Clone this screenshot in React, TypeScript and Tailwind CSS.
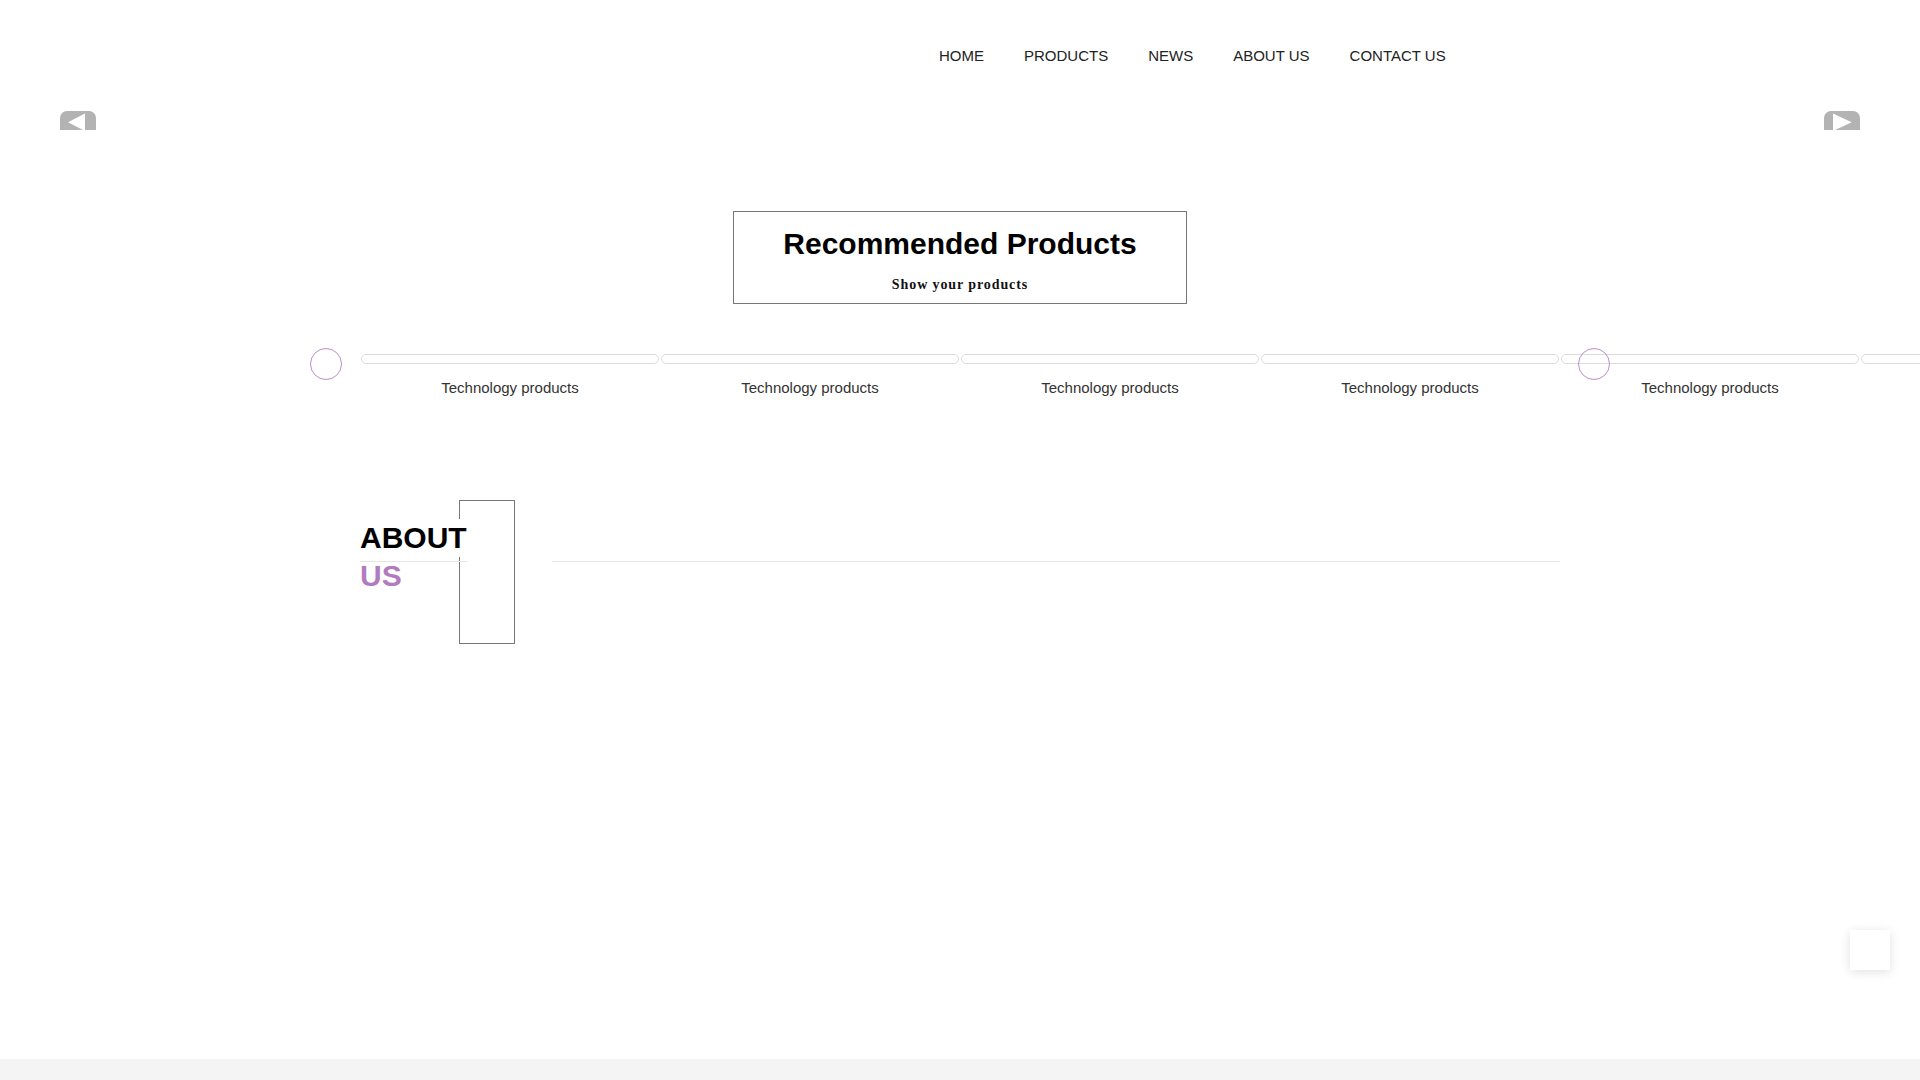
import React from "react";

const NAV = ["HOME", "PRODUCTS", "NEWS", "ABOUT US", "CONTACT US"];
// last slide only peeks in at the right edge, its caption is off screen
const SLIDES = ["Technology products", "Technology products", "Technology products", "Technology products", "Technology products", ""];

function Arrow({ dir }: { dir: "left" | "right" }) {
  return (
    <button
      type="button"
      aria-label={dir === "left" ? "Previous" : "Next"}
      className={`absolute top-0 w-9 h-9 rounded-[7px] bg-[#b3b3b3] ${
        dir === "left" ? "left-[60px]" : "right-[60px]"
      }`}
    >
      <svg width="36" height="36" viewBox="0 0 36 36" className="block">
        {dir === "left" ? (
          <polygon points="8,11.3 25,2.6 25,20" fill="#fff" />
        ) : (
          <polygon points="9,2.6 9,20 27.7,11.3" fill="#fff" />
        )}
      </svg>
    </button>
  );
}

export default function App() {
  return (
    <div className="min-h-screen w-full overflow-hidden bg-white flex flex-col font-['Liberation_Sans',Arial,sans-serif]">
      <main className="flex-1">
        {/* Header */}
        <header className="h-[111px]">
          <div className="w-[1200px] mx-auto h-full flex items-center">
            <nav className="ml-[559px] flex">
              {NAV.map((item) => (
                <a
                  key={item}
                  href="#"
                  className="px-[20px] text-[15px] leading-[20px] text-[#222] whitespace-nowrap"
                >
                  {item}
                </a>
              ))}
            </nav>
          </div>
        </header>

        {/* Banner (empty slider, arrows clipped) */}
        <div className="relative h-[19px] overflow-hidden">
          <Arrow dir="left" />
          <Arrow dir="right" />
        </div>

        {/* Recommended products */}
        <section className="mt-[81px]">
          <div className="mx-auto w-[454px] h-[93px] border border-[#777] text-center">
            <h2 className="pt-[14px] text-[30px] leading-[36px] font-bold text-black">
              Recommended Products
            </h2>
            <p className="mt-[13px] text-[14px] leading-[20px] font-bold tracking-[0.9px] text-[#111] font-['Liberation_Serif','Times_New_Roman',serif]">
              Show your products
            </p>
          </div>

          <div className="relative w-[1200px] mx-auto mt-[50px]">
            <div className="flex">
              {SLIDES.map((label, i) => (
                <div key={i} className="w-[300px] shrink-0 px-[1px]">
                  <div className="h-[10px] rounded-[5px] border border-[#dcdcdc]" />
                  <p className="mt-[14px] h-[20px] text-center text-[15px] leading-[20px] text-[#333] whitespace-nowrap">
                    {label}
                  </p>
                </div>
              ))}
            </div>
            <button
              type="button"
              aria-label="Previous"
              className="absolute left-[-50px] top-[-6px] w-8 h-8 rounded-full border border-[#bb8fcb] bg-transparent"
            />
            <button
              type="button"
              aria-label="Next"
              className="absolute left-[1218px] top-[-6px] w-8 h-8 rounded-full border border-[#bb8fcb] bg-transparent"
            />
          </div>
        </section>

        {/* About us */}
        <section className="w-[1200px] mx-auto mt-[102px] flex">
          <div className="relative w-[192px] shrink-0 h-[143px]">
            <div className="absolute left-[99px] top-0 w-[56px] h-[144px] border border-[#777]" />
            <div className="relative pt-[19px]">
              <h2 className="inline-block bg-white text-[30px] leading-[38px] font-bold text-black">
                ABOUT
              </h2>
              <div className="mt-[4px] h-px w-[107px] bg-[#e6e6e6]" />
              <p className="text-[30px] leading-[28px] font-bold text-[#b07cbf]">US</p>
            </div>
          </div>
          <div className="flex-1 pt-[61px]">
            <div className="h-px w-[1008px] bg-[#e6e6e6]" />
          </div>
        </section>
      </main>

      <footer className="h-[21px] bg-[#f4f4f4]" />

      {/* Back to top */}
      <button
        type="button"
        aria-label="Back to top"
        className="fixed right-[30px] bottom-[110px] w-10 h-10 bg-white shadow-[0_2px_10px_rgba(0,0,0,0.12)]"
      />
    </div>
  );
}
